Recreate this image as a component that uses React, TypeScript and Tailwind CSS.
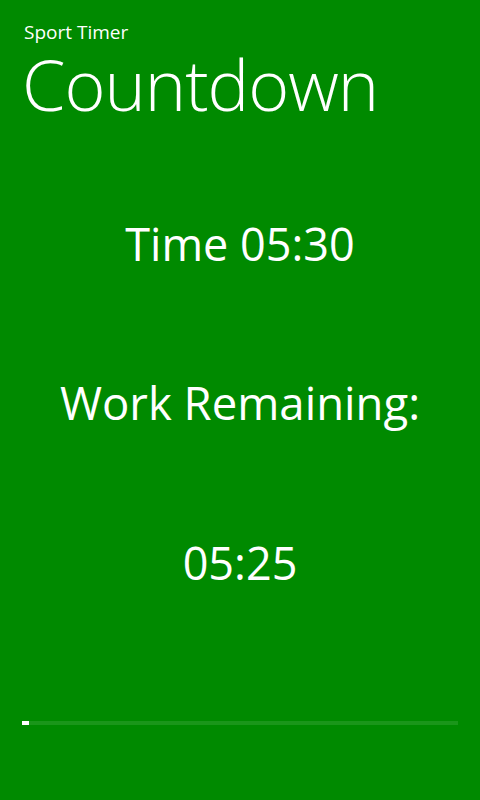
import React from "react";

export default function App() {
  const progress = 7 / 436;
  return (
    <div
      className="w-[480px] h-[800px] bg-[#008a00] text-white flex flex-col overflow-hidden"
      style={{ fontFamily: '"Open Sans", "Noto Sans", sans-serif' }}
    >
      <div className="pl-[24px] pt-[19px]">
        <div className="text-[19px] leading-[26px] font-normal">Sport Timer</div>
        <div className="text-[70px] leading-[78px] font-light -ml-[2px] tracking-[-1px]">Countdown</div>
      </div>
      <div className="flex flex-col items-center">
        <div className="mt-[89px] h-[64px] text-[45px] leading-[64px]">Time 05:30</div>
        <div className="mt-[94px] h-[64px] text-[45.5px] leading-[64px]">Work Remaining:</div>
        <div className="mt-[97px] h-[64px] text-[45px] leading-[64px]">05:25</div>
      </div>
      <div className="mt-[126px] mx-[22px] h-[4px] bg-[#1a961a] flex">
        <div className="h-full bg-white" style={{ width: `${progress * 100}%` }} />
      </div>
    </div>
  );
}
